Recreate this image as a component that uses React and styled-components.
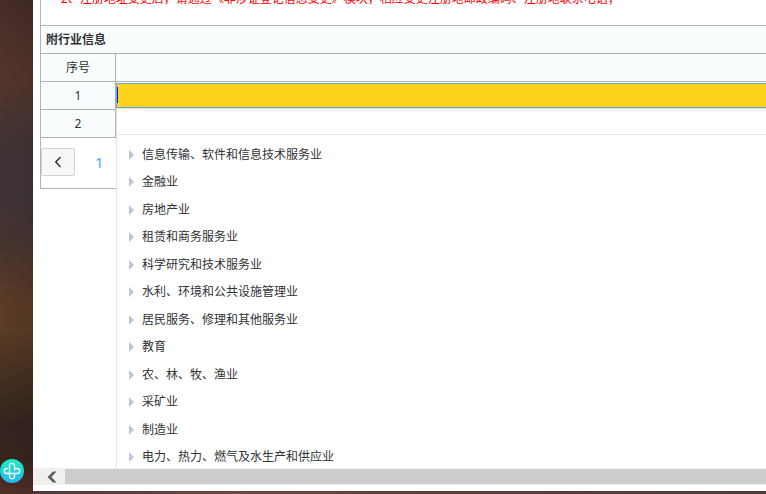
import styled, { createGlobalStyle } from 'styled-components';

const fonts = `"Noto Sans", "Noto Sans CJK SC", sans-serif`;

const colors = {
    line: '#b0b3b3',
    lightLine: '#e4e5e7',
    head: '#f8fcfd',
    text: '#303133',
    primary: '#4dabf5',
    field: '#ffd21e',
    fieldBorder: '#6aa9d8',
};

const GlobalStyle = createGlobalStyle`
    * {
        box-sizing: border-box;
    }
    body {
        margin: 0;
        font-family: ${fonts};
        font-size: 12px;
        color: ${colors.text};
    }
    button, input {
        font: inherit;
        color: inherit;
    }
`;

const Desktop = styled.div`
    display: flex;
    height: 100vh;
    overflow: hidden;
    background: linear-gradient(90deg, #4a3635, #6b473f 30%, #5c4038 60%, #513a36);
`;

const Wallpaper = styled.aside`
    width: 33px;
    flex: none;
    display: flex;
    flex-direction: column;
    justify-content: flex-end;
    padding-bottom: 11px;
    background:
        linear-gradient(270deg, rgba(0, 0, 0, 0.08), rgba(0, 0, 0, 0)),
        linear-gradient(
            180deg,
            #452c28 0%,
            #54352c 16%,
            #413334 29%,
            #3f3337 40%,
            #47332f 49%,
            #5b3b27 61%,
            #5a3c27 67%,
            #46301f 76%,
            #33241f 86%,
            #3a241f 93%,
            #52302a 100%
        );
`;

const AssistantButton = styled.button`
    width: 24px;
    height: 24px;
    padding: 0;
    border: none;
    background: none;

    svg {
        display: block;
    }
`;

const Window = styled.main`
    flex: 1;
    min-width: 0;
    display: flex;
    flex-direction: column;
    margin-bottom: 3px;
    padding-bottom: 6px;
    background: #ffffff;
`;

const Content = styled.div`
    flex: 1;
    min-height: 0;
    padding-left: 7px;
    overflow: hidden;
`;

const Form = styled.section`
    border-left: 1px solid ${colors.line};
    border-bottom: 1px solid ${colors.line};
`;

const Note = styled.div`
    height: 26px;
    display: flex;
    align-items: flex-start;
    padding-left: 20px;
    border-bottom: 1px solid ${colors.line};
    overflow: hidden;
`;

const NoteText = styled.p`
    margin: -10px 0 0;
    line-height: 18px;
    white-space: nowrap;
    color: #ff0000;
`;

const Table = styled.table`
    width: 100%;
    table-layout: fixed;
    border-collapse: separate;
    border-spacing: 0;

    col:first-child {
        width: 75px;
    }
`;

const HeadCell = styled.th`
    height: 28px;
    padding: 0 5px;
    border-bottom: 1px solid ${colors.line};
    border-right: ${(props) => (props.$divider ? `1px solid ${colors.line}` : 'none')};
    background: ${colors.head};
    text-align: ${(props) => (props.$title ? 'left' : 'center')};
    font-weight: ${(props) => (props.$title ? 700 : 400)};
    line-height: 18px;
`;

const FieldCell = styled.td`
    position: relative;
    height: 28px;
    padding: 1px 0 0;
    vertical-align: top;
`;

const Field = styled.input`
    display: block;
    width: 100%;
    height: 25px;
    padding: 0 4px;
    border: 1px solid ${colors.fieldBorder};
    border-right: none;
    outline: none;
    background: ${colors.field};
    caret-color: transparent;
`;

const Caret = styled.span`
    position: absolute;
    left: 1px;
    top: 5px;
    width: 1px;
    height: 16px;
    background: #002de1;
`;

const Popup = styled.div`
    position: absolute;
    z-index: 1;
    top: 26px;
    left: 0;
    right: 0;
    height: 100vh;
    border-top: 1px solid #dfe1e4;
    border-left: 1px solid ${colors.lightLine};
    background: #ffffff;
`;

const Search = styled.input`
    display: block;
    width: 100%;
    height: 26px;
    padding: 0 8px;
    border: none;
    border-bottom: 1px solid ${colors.lightLine};
    outline: none;
    background: #ffffff;
`;

const Tree = styled.ul`
    margin: 0;
    padding: 6px 0 0 12px;
    list-style: none;
`;

const TreeItem = styled.li`
    display: flex;
    align-items: center;
    height: 27px;
    line-height: 18px;
    white-space: nowrap;

    &:nth-child(even) {
        height: 28px;
    }
`;

const TreeArrow = styled.span`
    flex: none;
    margin-right: 8px;
    border-left: 5px solid #c0c4cc;
    border-top: 5px solid transparent;
    border-bottom: 5px solid transparent;
`;

const Pager = styled.nav`
    display: flex;
    align-items: center;
    height: 50px;
    padding-bottom: 2px;
`;

const PrevButton = styled.button`
    width: 34px;
    height: 28px;
    display: flex;
    align-items: center;
    justify-content: center;
    padding: 0;
    border: 1px solid #d2d2d2;
    border-radius: 2px;
    background: #f7f7f7;
`;

const PageLink = styled.a`
    margin-left: 20px;
    font-size: 15px;
    color: ${colors.primary};
    text-decoration: none;
`;

const ScrollBar = styled.div`
    display: flex;
    flex: none;
    height: 17px;
    padding: 1px 0;
    background: #f0f0f0;
`;

const ScrollButton = styled.button`
    width: 32px;
    display: flex;
    align-items: center;
    justify-content: flex-end;
    padding: 0 8px 0 0;
    border: none;
    background: none;
`;

const ScrollThumb = styled.div`
    flex: 1;
    background: #cdcdcd;
`;

const industries = [
    '信息传输、软件和信息技术服务业',
    '金融业',
    '房地产业',
    '租赁和商务服务业',
    '科学研究和技术服务业',
    '水利、环境和公共设施管理业',
    '居民服务、修理和其他服务业',
    '教育',
    '农、林、牧、渔业',
    '采矿业',
    '制造业',
    '电力、热力、燃气及水生产和供应业',
];

function AssistantIcon() {
    return (
        <svg width="24" height="24" viewBox="0 0 24 24" fill="none">
            <defs>
                <linearGradient id="assistant" x1="0" y1="0" x2="0" y2="1">
                    <stop offset="0" stopColor="#1df0c4" />
                    <stop offset="1" stopColor="#22b8e8" />
                </linearGradient>
            </defs>
            <circle cx="12" cy="12" r="12" fill="url(#assistant)" />
            <path
                d="M14.5 11.5V6.8a2.5 2.5 0 0 0-5 0v10.4a2.5 2.5 0 0 0 5 0v-1.4M12 14.5H6.8a2.5 2.5 0 0 1 0-5H7.5M14.5 9.5h2.7a2.5 2.5 0 0 1 0 5H12"
                stroke="#ffffff"
                strokeWidth="1.3"
                strokeLinecap="round"
            />
        </svg>
    );
}

function IndustryPopup() {
    return (
        <Popup>
            <Search type="text" aria-label="搜索" />
            <Tree>
                {industries.map((name) => (
                    <TreeItem key={name}>
                        <TreeArrow />
                        {name}
                    </TreeItem>
                ))}
            </Tree>
        </Popup>
    );
}

function App() {
    return (
        <Desktop>
            <GlobalStyle />
            <Wallpaper>
                <AssistantButton type="button" aria-label="助手">
                    <AssistantIcon />
                </AssistantButton>
            </Wallpaper>
            <Window>
                <Content>
                    <Form>
                        <Note>
                            <NoteText>
                                2、注册地址变更后，请通过《非涉证登记信息变更》模块，相应变更注册地邮政编码、注册地联系电话；
                            </NoteText>
                        </Note>
                        <Table>
                            <colgroup>
                                <col />
                                <col />
                            </colgroup>
                            <thead>
                                <tr>
                                    <HeadCell colSpan={2} $title>附行业信息</HeadCell>
                                </tr>
                                <tr>
                                    <HeadCell $divider>序号</HeadCell>
                                    <HeadCell />
                                </tr>
                            </thead>
                            <tbody>
                                <tr>
                                    <HeadCell as="td" $divider>1</HeadCell>
                                    <FieldCell>
                                        <Field type="text" aria-label="行业" />
                                        <Caret />
                                        <IndustryPopup />
                                    </FieldCell>
                                </tr>
                                <tr>
                                    <HeadCell as="td" $divider>2</HeadCell>
                                    <FieldCell />
                                </tr>
                            </tbody>
                        </Table>
                        <Pager>
                            <PrevButton type="button" aria-label="上一页">
                                <svg width="8" height="12" viewBox="0 0 8 12" fill="none">
                                    <path d="M6.5 1L1.800 6l4.700 5" stroke="#333333" strokeWidth="1.5" />
                                </svg>
                            </PrevButton>
                            <PageLink href="#1">1</PageLink>
                        </Pager>
                    </Form>
                </Content>
                <ScrollBar>
                    <ScrollButton type="button" aria-label="向左滚动">
                        <svg width="10" height="12" viewBox="0 0 10 12">
                            <path d="M6 0.5H9.5L4.500 6l5 5.500H6L0.500 6z" fill="#606060" />
                        </svg>
                    </ScrollButton>
                    <ScrollThumb />
                </ScrollBar>
            </Window>
        </Desktop>
    );
}

export default App;
